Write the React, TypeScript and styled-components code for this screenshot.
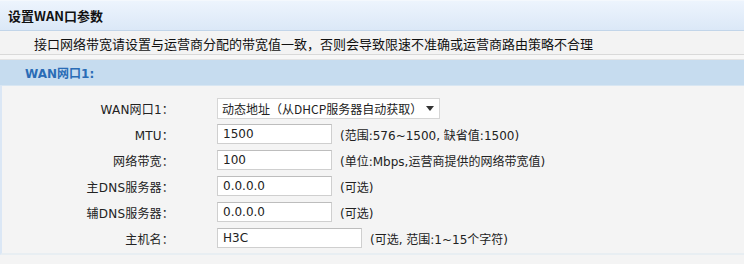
import React from "react";
import styled, { createGlobalStyle } from "styled-components";

const Global = createGlobalStyle`
  html, body { margin: 0; padding: 0; background: #f4f4f4; }
  body { font-family: "DejaVu Sans", "Noto Sans CJK SC", sans-serif; font-size: 12px; color: #000; }
`;

const Page = styled.div`
  width: 744px;
  display: flex;
  flex-direction: column;
`;

const Header = styled.div`
  height: 29px;
  border-top: 1px solid #f4f8fd;
  border-bottom: 1px solid #c2d5e9;
  background: linear-gradient(#edf4fd, #dbe8f7);
  display: flex;
  align-items: center;
  padding-left: 8px;
  font-family: "Noto Sans CJK SC", sans-serif;
  font-weight: bold;
  font-size: 13px;
  color: #111;
`;

const Notice = styled.div`
  height: 22px;
  margin-top: 1px;
  background: #f3f3f3;
  border-bottom: 1px solid #d9d9d9;
  display: flex;
  align-items: center;
  padding-left: 34px;
  font-family: "Noto Sans CJK SC", sans-serif;
  font-size: 13px;
  color: #111;
`;

const Gap = styled.div`
  height: 4px;
  background: #f7f7f7;
  border-bottom: 1px solid #e4e4e4;
`;

const SectionBar = styled.div`
  height: 25px;
  background: #c6dcef;
  border-bottom: 1px solid #d8e6f2;
  display: flex;
  align-items: center;
  padding-left: 25px;
  font-weight: bold;
  font-size: 12px;
  color: #2a6cb6;
`;

const Form = styled.div`
  background: #f4f4f4;
  border-left: 2px solid #dbe7f5;
  padding: 12px 0 5px 0;
  display: flex;
  flex-direction: column;
  gap: 6px;
  border-bottom: 2px solid #e8eef2;
`;

const Row = styled.div`
  display: flex;
  align-items: center;
  height: 20px;
`;

const Label = styled.div`
  width: 172px;
  text-align: right;
  font-size: 12px;
  color: #222;
  letter-spacing: 0.2px;
`;

const Field = styled.div`
  margin-left: 43px;
  display: flex;
  align-items: center;
`;

const Input = styled.div<{ $w: number }>`
  box-sizing: border-box;
  width: ${(p) => p.$w}px;
  height: 20px;
  background: #fff;
  border: 1px solid #cfcfcf;
  border-top-color: #bdbdbd;
  padding-left: 5px;
  display: flex;
  align-items: center;
  font-size: 12px;
  color: #222;
`;

const Select = styled.div`
  box-sizing: border-box;
  width: 223px;
  height: 21px;
  background: #fff;
  border: 1px solid #d6d6d6;
  padding-left: 4px;
  display: flex;
  align-items: center;
  justify-content: space-between;
  font-family: "Noto Sans CJK SC", sans-serif;
  font-size: 12px;
  color: #222;
`;

const Arrow = styled.span`
  width: 0;
  height: 0;
  border-left: 4px solid transparent;
  border-right: 4px solid transparent;
  border-top: 5px solid #333;
  margin-right: 5px;
`;

const Hint = styled.span`
  margin-left: 8px;
  font-size: 12px;
  color: #222;
`;

const rows = [
  { label: "MTU：", value: "1500", w: 115, hint: "(范围:576~1500, 缺省值:1500)" },
  { label: "网络带宽：", value: "100", w: 115, hint: "(单位:Mbps,运营商提供的网络带宽值)" },
  { label: "主DNS服务器：", value: "0.0.0.0", w: 115, hint: "(可选)" },
  { label: "辅DNS服务器：", value: "0.0.0.0", w: 115, hint: "(可选)" },
  { label: "主机名：", value: "H3C", w: 145, hint: "(可选, 范围:1~15个字符)" },
];

export default function App() {
  return (
    <Page>
      <Global />
      <Header>设置WAN口参数</Header>
      <Notice>接口网络带宽请设置与运营商分配的带宽值一致，否则会导致限速不准确或运营商路由策略不合理</Notice>
      <Gap />
      <SectionBar>WAN网口1:</SectionBar>
      <Form>
        <Row>
          <Label>WAN网口1：</Label>
          <Field>
            <Select>
              <span>动态地址（从DHCP服务器自动获取）</span>
              <Arrow />
            </Select>
          </Field>
        </Row>
        {rows.map((r) => (
          <Row key={r.label}>
            <Label>{r.label}</Label>
            <Field>
              <Input $w={r.w}>{r.value}</Input>
              <Hint>{r.hint}</Hint>
            </Field>
          </Row>
        ))}
      </Form>
    </Page>
  );
}
